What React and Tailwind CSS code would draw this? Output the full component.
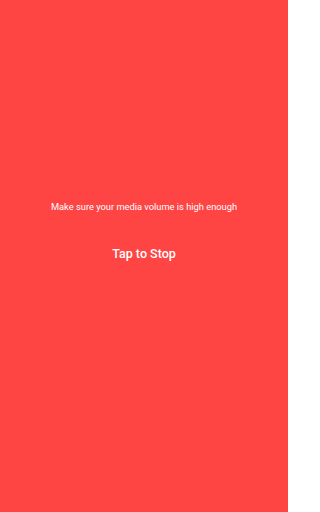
export default function App() {
  return (
    <div className="w-[288px] h-[512px] bg-[#ff4444] flex flex-col items-center text-white" style={{ fontFamily: 'Roboto, sans-serif' }}>
      <p className="mt-[201px] text-[9.3px] leading-[12px]">Make sure your media volume is high enough</p>
      <button className="mt-[33px] text-[12.5px] leading-[16px] font-medium">Tap to Stop</button>
    </div>
  );
}
